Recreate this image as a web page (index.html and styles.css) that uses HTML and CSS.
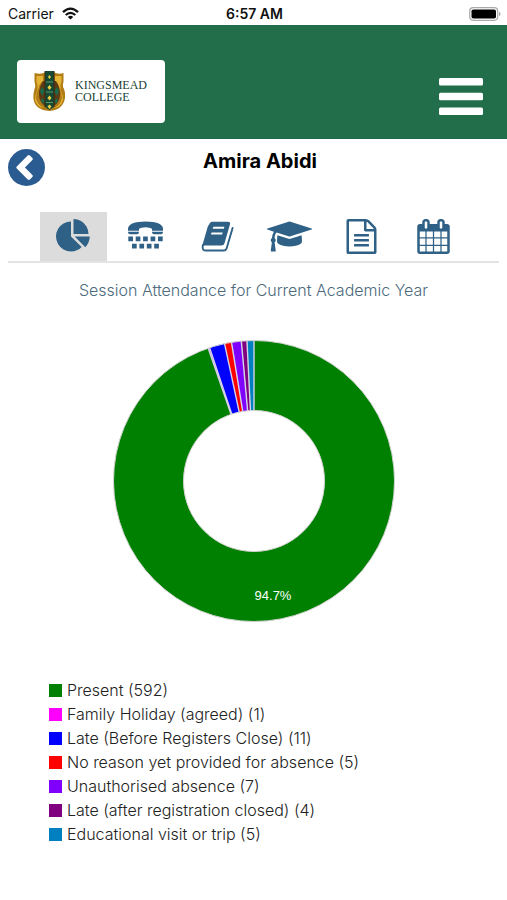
FILE: index.html
```html
<!DOCTYPE html>
<html lang="en">
<head>
<meta charset="utf-8">
<meta name="viewport" content="width=device-width, initial-scale=1">
<title>Kingsmead College</title>
<link rel="stylesheet" href="styles.css">
</head>
<body>
<div class="status">
  <div class="carrier">
    <span>Carrier</span>
    <svg width="17" height="13" viewBox="0 0 17 13" aria-hidden="true">
      <path d="M1 5.200Q8.500-2 16 5.200" fill="none" stroke="#111" stroke-width="2.300"/>
      <path d="M3.700 8Q8.500 3.600 13.300 8" fill="none" stroke="#111" stroke-width="2.200"/>
      <path d="M5.800 9.900Q8.500 7.600 11.200 9.900L8.500 12.600z" fill="#111"/>
    </svg>
  </div>
  <span class="time">6:57 AM</span>
  <svg class="battery" width="32" height="14" viewBox="0 0 32 14" aria-hidden="true">
    <rect x=".7" y=".7" width="28" height="12.600" rx="3.500" fill="#fff" stroke="#aaa" stroke-width="1.200"/>
    <rect x="2.500" y="2.500" width="24.500" height="9" rx="1.800" fill="#000"/>
    <path d="M30 4.800q1.600.6 1.600 2.200t-1.600 2.200z" fill="#aaa"/>
  </svg>
</div>

<header class="header">
  <a class="logo" href="#">
    <svg width="32" height="42" viewBox="0 0 32 42" aria-hidden="true">
      <path d="M1.500 3q5 1.500 9 0l2-1h8l2 1q4 1.500 8 0v9q-1.500 4 .5 7 1.500 4 1 9Q30 40 16.500 41 2 40 .5 29 0 24 1.500 19q1.500-3 0-7z" fill="#b07c16"/>
      <path d="M3.500 6h6.500v5q-4 3-4.500 7-2.500 5-2.500 10 1 7 8 10-7-1-9-8 0-5 2-9 1.500-5-.5-9zM28.500 6H22v5q4 3 4.500 7 2.500 5 2.500 10-1 7-8 10 7-1 9-8 0-5-2-9-1.500-5 .5-9z" fill="#e6b535"/>
      <path d="M10 11q-4 6-4 13 0 8 6 12h9q6-4 6-12 0-7-4-13z" fill="#5d3a14"/>
      <path d="M9 17l3 4-3 5-2-5zM24 17l2 4-2 5-3-5zM9 28l3 3-2 3-2-3zM24 28l-3 3 2 3 2-3z" fill="#1c6a4a"/>
      <path d="M12 1h9v36l-4.500 3-4.500-3z" fill="#174a35"/>
      <path d="M12 1v36M21 1v36" stroke="#3b2b12" stroke-width="1"/>
      <path d="M16.500 5l1.500 2-1.500 2-1.500-2zM16.500 15l2 2.500-2 2.500-2-2.500zM16.500 25.500l2 2.500-2 2.500-2-2.500zM16.500 34.500l2 2-2 2.500-2-2.500z" fill="#e9cf45"/>
      <path d="M13 12h7M13 22h7M13 32.500h7" stroke="#5a9a6d" stroke-width="1.200"/>
    </svg>
    <span class="logo-text">KINGSMEAD<br>COLLEGE</span>
  </a>
  <button class="menu" type="button" aria-label="Menu">
    <svg width="44" height="37" viewBox="0 0 44 37" aria-hidden="true" fill="#fff">
      <rect width="44" height="7.500" rx="1.500"/>
      <rect y="14.700" width="44" height="7.500" rx="1.500"/>
      <rect y="29.400" width="44" height="7.500" rx="1.500"/>
    </svg>
  </button>
</header>

<main class="page">
  <div class="title-row">
    <a class="back" href="#" aria-label="Back">
      <svg width="37" height="37" viewBox="128 128 1536 1536" aria-hidden="true"><path d="M1037 1395l102-102q19-19 19-45t-19-45l-307-307 307-307q19-19 19-45t-19-45l-102-102q-19-19-45-19t-45 19l-454 454q-19 19-19 45t19 45l454 454q19 19 45 19t45-19zm627-499q0 209-103 385.500t-279.500 279.500-385.500 103-385.500-103-279.500-279.500-103-385.500 103-385.500 279.500-279.500 385.500-103 385.500 103 279.500 279.500 103 385.500z"/></svg>
    </a>
    <h1>Amira Abidi</h1>
  </div>

  <nav class="tabs">
    <a class="tab active" href="#" aria-label="Attendance">
      <svg width="35" height="35" viewBox="0 0 1792 1792" aria-hidden="true"><path d="M768 890l546 546q-106 108-247.500 168t-298.500 60q-209 0-385.500-103t-279.500-279.500-103-385.500 103-385.500 279.500-279.500 385.500-103v762zm187 6h773q0 157-60 298.500t-168 247.500zm709-128h-768v-768q209 0 385.500 103t279.500 279.500 103 385.500z"/></svg>
    </a>
    <a class="tab" href="#" aria-label="Contact">
      <svg width="35" height="35" viewBox="0 0 35 35" aria-hidden="true">
        <path d="M0 11.800V9.500Q1 2.600 17.500 2.600T35 9.500v2.300H24V9.800Q22 8.300 17.500 8.300T11 9.800v2z"/>
        <path d="M0 12.700h11v.6q-.2 2-2 2H2q-1.800 0-2-2zM24 12.700h11v.6q-.2 2-2 2h-7q-1.800 0-2-2z"/>
        <path d="M.3 17.500h4.700v4.700H.3zM7.700 17.500h4.700v4.700H7.700zM15.100 17.500h4.700v4.700h-4.700zM22.600 17.500h4.700v4.700h-4.700zM30 17.500h4.700v4.700H30zM4 24.800h4.700v4.700H4zM11.400 24.800h4.700v4.700h-4.700zM18.800 24.800h4.700v4.700h-4.700zM26.200 24.800h4.700v4.700h-4.700z"/>
      </svg>
    </a>
    <a class="tab" href="#" aria-label="Homework">
      <svg width="35" height="35" viewBox="0 0 35 35" aria-hidden="true">
        <path fill-rule="evenodd" d="M12.500 2.800H28q2.700 0 2 2.500L24.600 24q-.7 2.500-3.300 2.500H4.800q-2.200 0-2.800 1L7.800 7.500l2-3.300q1-1.400 2.700-1.400zM13.300 7.800l-.6 1.900H23.800l.6-1.900zM11.600 13.500l-.6 1.900H22.100l.6-1.900z"/>
        <path d="M2.900 26q-1.300 5.500 2.700 5.500h18.200q2.200 0 2.800-2l6-20.500" fill="none" stroke="#2f6186" stroke-width="1.900" stroke-linecap="round"/>
      </svg>
    </a>
    <a class="tab" href="#" aria-label="Results">
      <svg width="45" height="35" viewBox="0 0 2304 1792" aria-hidden="true"><path d="M1774 836l18 316q4 69-82 128t-235 93.500-323 34.500-323-34.500-235-93.500-82-128l18-316 574 181q22 7 48 7t48-7zm530-324q0 23-22 31l-1120 352q-4 1-10 1t-10-1l-652-206q-43 34-71 111.500t-34 178.500q63 36 63 109 0 69-58 107l58 433q2 14-8 25-9 11-24 11h-192q-15 0-24-11-10-11-8-25l58-433q-58-38-58-107 0-73 65-111 11-207 98-330l-333-104q-22-8-22-31t22-31l1120-352q4-1 10-1t10 1l1120 352q22 8 22 31z"/></svg>
    </a>
    <a class="tab" href="#" aria-label="Reports">
      <svg width="35" height="35" viewBox="0 0 1792 1792" aria-hidden="true"><path d="M1596 380q28 28 48 76t20 88v1152q0 40-28 68t-68 28h-1344q-40 0-68-28t-28-68v-1600q0-40 28-68t68-28h896q40 0 88 20t76 48zm-444-244v376h376q-10-29-22-41l-313-313q-12-12-41-22zm384 1528v-1024h-416q-40 0-68-28t-28-68v-416h-768v1536h1280zm-1024-864q0-14 9-23t23-9h704q14 0 23 9t9 23v64q0 14-9 23t-23 9h-704q-14 0-23-9t-9-23v-64zm736 224q14 0 23 9t9 23v64q0 14-9 23t-23 9h-704q-14 0-23-9t-9-23v-64q0-14 9-23t23-9h704zm0 256q14 0 23 9t9 23v64q0 14-9 23t-23 9h-704q-14 0-23-9t-9-23v-64q0-14 9-23t23-9h704z"/></svg>
    </a>
    <a class="tab" href="#" aria-label="Calendar">
      <svg width="35" height="35" viewBox="0 0 1792 1792" aria-hidden="true"><path d="M192 1664h288v-288h-288v288zm352 0h320v-288h-320v288zm-352-352h288v-320h-288v320zm352 0h320v-320h-320v320zm-352-384h288v-288h-288v288zm736 736h320v-288h-320v288zm-384-736h320v-288h-320v288zm768 736h288v-288h-288v288zm-384-352h320v-320h-320v320zm-352-864v-288q0-13-9.500-22.500t-22.500-9.500h-64q-13 0-22.500 9.500t-9.500 22.500v288q0 13 9.500 22.500t22.500 9.500h64q13 0 22.500-9.500t9.500-22.500zm736 864h288v-320h-288v320zm-384-384h320v-288h-320v288zm384 0h288v-288h-288v288zm32-480v-288q0-13-9.500-22.500t-22.500-9.500h-64q-13 0-22.500 9.500t-9.500 22.500v288q0 13 9.500 22.500t22.500 9.500h64q13 0 22.500-9.500t9.500-22.500zm384-64v1280q0 52-38 90t-90 38h-1408q-52 0-90-38t-38-90v-1280q0-52 38-90t90-38h128v-96q0-66 47-113t113-47h64q66 0 113 47t47 113v96h384v-96q0-66 47-113t113-47h64q66 0 113 47t47 113v96h128q52 0 90 38t38 90z"/></svg>
    </a>
  </nav>

  <section>
    <h2>Session Attendance for Current Academic Year</h2>
    <svg class="chart" width="282" height="282" viewBox="-141 -141 282 282" role="img" aria-label="Session attendance">
      <g transform="rotate(-90)" fill="none" stroke-width="70">
        <circle r="105.500" pathLength="625" stroke="#008000" stroke-dasharray="592 33"/>
        <circle r="105.500" pathLength="625" stroke="#ff00ff" stroke-dasharray="1 624" stroke-dashoffset="-592"/>
        <circle r="105.500" pathLength="625" stroke="#0000ff" stroke-dasharray="11 614" stroke-dashoffset="-593"/>
        <circle r="105.500" pathLength="625" stroke="#ff0000" stroke-dasharray="5 620" stroke-dashoffset="-604"/>
        <circle r="105.500" pathLength="625" stroke="#8000ff" stroke-dasharray="7 618" stroke-dashoffset="-609"/>
        <circle r="105.500" pathLength="625" stroke="#800080" stroke-dasharray="4 621" stroke-dashoffset="-616"/>
        <circle r="105.500" pathLength="625" stroke="#0080c0" stroke-dasharray="5 620" stroke-dashoffset="-620"/>
      </g>
      <g fill="none" stroke="#d3d3e6" stroke-width="1.400">
        <path d="M0-70v-71"/>
        <path d="M0-70v-71" transform="rotate(-2.880)"/>
        <path d="M0-70v-71" transform="rotate(-5.180)"/>
        <path d="M0-70v-71" transform="rotate(-9.220)"/>
        <path d="M0-70v-71" transform="rotate(-12.100)"/>
        <path d="M0-70v-71" transform="rotate(-18.430)"/>
        <path d="M0-70v-71" transform="rotate(-19.010)"/>
      </g>
      <g fill="none" stroke="#d3d3d3" stroke-width="1"><circle r="140.500"/><circle r="70.500"/></g>
      <text class="chart-label" x="19" y="119" text-anchor="middle">94.7%</text>
    </svg>
    <ul class="legend">
      <li><i class="key present"></i>Present (592)</li>
      <li><i class="key holiday"></i>Family Holiday (agreed) (1)</li>
      <li><i class="key late-before"></i>Late (Before Registers Close) (11)</li>
      <li><i class="key no-reason"></i>No reason yet provided for absence (5)</li>
      <li><i class="key unauthorised"></i>Unauthorised absence (7)</li>
      <li><i class="key late-after"></i>Late (after registration closed) (4)</li>
      <li><i class="key visit"></i>Educational visit or trip (5)</li>
    </ul>
  </section>
</main>
</body>
</html>
```
FILE: styles.css
```css
* { box-sizing: border-box; }
body {
  margin: 0;
  background: #fff;
  color: #333;
  font-family: "Inter", "Liberation Sans", sans-serif;
}
svg { display: block; }

.status {
  display: grid;
  grid-template-columns: 1fr auto 1fr;
  align-items: center;
  height: 25px;
  padding: 2px 6px 0 8px;
  color: #111;
  font-size: 14px;
}
.carrier { display: flex; align-items: center; gap: 8px; }
.time { font-weight: 600; }
.battery { justify-self: end; }

.header {
  display: flex;
  justify-content: space-between;
  align-items: center;
  height: 114px;
  padding: 19px 24px 0 17px;
  background: #236e4a;
  border-bottom: 1px solid #1f6a50;
}
.logo {
  display: flex;
  align-items: center;
  gap: 10px;
  width: 148px;
  height: 63px;
  padding-left: 16px;
  border-radius: 4px;
  background: #fff;
  color: #173f33;
  text-decoration: none;
}
.logo-text {
  font-family: "Liberation Serif", serif;
  font-size: 12px;
  line-height: 12px;
}
.menu {
  padding: 10px 0 0;
  border: 0;
  background: none;
}

.page { padding: 10px 8px; }
.title-row {
  display: grid;
  grid-template-columns: 37px 1fr 24px;
  align-items: start;
}
.back { fill: #2b5c91; }
h1 {
  margin: 0;
  color: #000;
  font-size: 20px;
  font-weight: 700;
  line-height: 24px;
  text-align: center;
}

.tabs {
  display: flex;
  gap: 5px;
  margin-top: 26px;
  padding-left: 32px;
  border-bottom: 2px solid #e4e4e4;
}
.tab {
  display: flex;
  justify-content: center;
  width: 67px;
  padding: 7px 0;
  fill: #2f6186;
}
.tab.active { background: #dcdcdc; }

h2 {
  margin: 15px 0 0;
  color: #4c6a7c;
  font-size: 16px;
  font-weight: 300;
  line-height: 24px;
  text-align: center;
}
.chart { margin: 38px auto 0; }
.chart-label {
  fill: #fff;
  font-family: "Liberation Sans", sans-serif;
  font-size: 13px;
}

.legend {
  margin: 56px 0 0;
  padding: 0 0 0 41px;
  color: #222;
  font-size: 16px;
  font-weight: 300;
  line-height: 24px;
  list-style: none;
}
.legend li { display: flex; align-items: center; gap: 5px; }
.key { width: 13px; height: 13px; }
.present { background: #008000; }
.holiday { background: #ff00ff; }
.late-before { background: #0000ff; }
.no-reason { background: #ff0000; }
.unauthorised { background: #8000ff; }
.late-after { background: #800080; }
.visit { background: #0080c0; }
```
